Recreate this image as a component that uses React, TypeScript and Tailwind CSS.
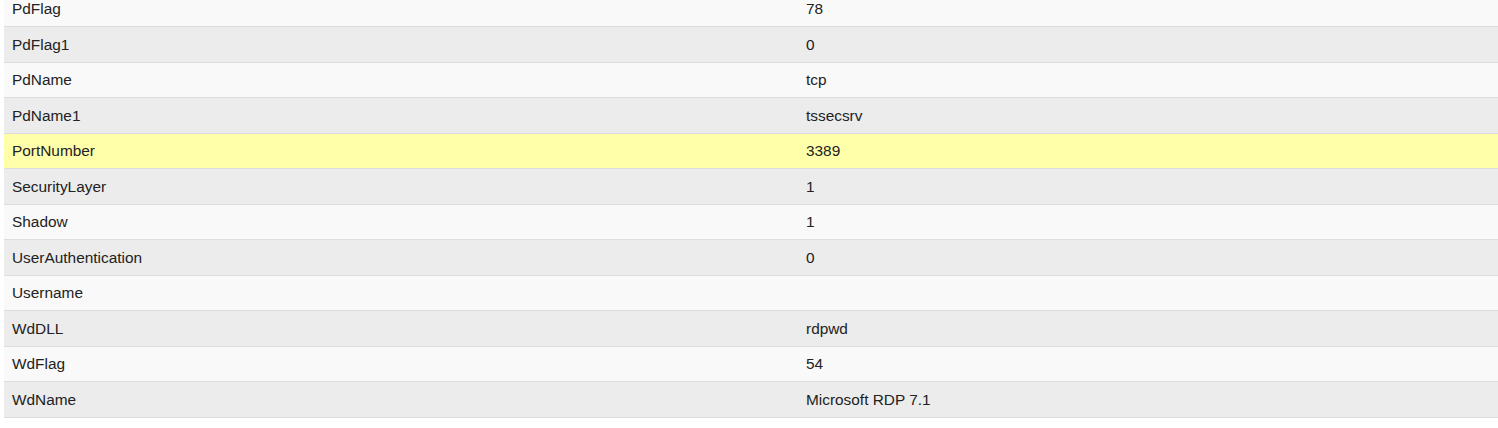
import React from "react";

const rows: [string, string][] = [
  ["PdFlag", "78"],
  ["PdFlag1", "0"],
  ["PdName", "tcp"],
  ["PdName1", "tssecsrv"],
  ["PortNumber", "3389"],
  ["SecurityLayer", "1"],
  ["Shadow", "1"],
  ["UserAuthentication", "0"],
  ["Username", ""],
  ["WdDLL", "rdpwd"],
  ["WdFlag", "54"],
  ["WdName", "Microsoft RDP 7.1"],
];

export default function App() {
  return (
    <div className="w-[1498px] h-[428px] overflow-hidden bg-white">
      <div
        className="ml-[4px] -mt-[8px] text-[15.4px] text-[#222222]"
        style={{ fontFamily: '"Liberation Sans", Arial, sans-serif' }}
      >
        {rows.map(([k, v], i) => {
          const bg =
            k === "PortNumber"
              ? "bg-[#ffffaa]"
              : i % 2 === 0
              ? "bg-[#f9f9f9]"
              : "bg-[#ececec]";
          const h = i % 2 === 0 ? "h-[35px]" : "h-[36px]";
          return (
            <div
              key={k}
              className={`grid grid-cols-[794px_1fr] items-center border-b border-[#dddddd] ${bg} ${h}`}
            >
              <div className="pl-[8px]">{k}</div>
              <div className="pl-[8px]">{v}</div>
            </div>
          );
        })}
      </div>
    </div>
  );
}
